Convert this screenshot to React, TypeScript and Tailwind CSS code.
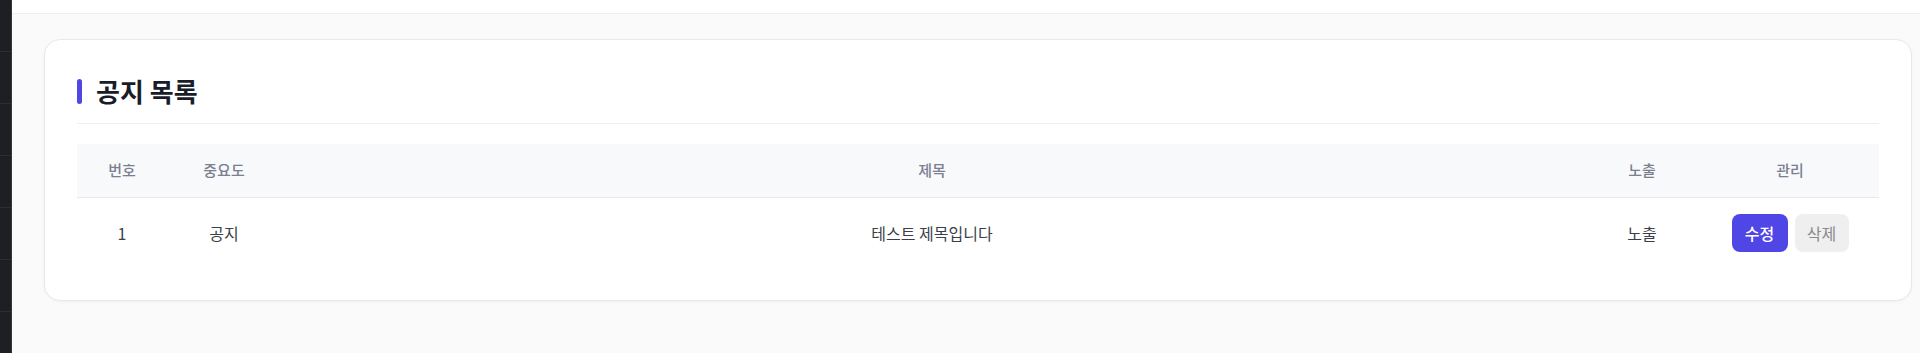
import React from "react";

type Notice = {
  id: number;
  level: string;
  title: string;
  visible: string;
};

const notices: Notice[] = [
  { id: 1, level: "공지", title: "테스트 제목입니다", visible: "노출" },
];

export default function App() {
  return (
    <div
      className="w-[1920px] h-[353px] flex overflow-hidden bg-[#fafafa]"
      style={{ fontFamily: '"Noto Sans CJK KR", "Noto Sans", sans-serif' }}
    >
      {/* Sidebar edge */}
      <div className="w-[12px] shrink-0 bg-[#1e1f23] border-r border-[#34363c] flex flex-col">
        {[0, 1, 2, 3, 4, 5, 6].map((i) => (
          <div key={i} className="h-[52px] shrink-0 border-b border-[#2c2e33]" />
        ))}
      </div>

      <div className="flex-1 flex flex-col">
        {/* Top bar */}
        <div className="h-[14px] shrink-0 bg-white border-b border-[#eeeeee]" />

        <main className="pl-[32px] pr-[8px] pt-[25px]">
          <div className="bg-white border border-[#e8e8ec] rounded-2xl shadow-[0_1px_3px_rgba(0,0,0,0.04)] px-[32px] pt-[32px] pb-[31px]">
            <div className="flex items-center gap-[14px] h-[38px]">
              <span className="w-[5px] h-[25px] rounded-full bg-[#4f46e5]" />
              <h1 className="text-[26px] leading-[32px] font-bold text-[#1a1d29]">
                공지 목록
              </h1>
            </div>
            <div className="mt-[13px] border-b border-[#eeeff2]" />

            <table className="w-full mt-[20px] table-fixed border-collapse">
              <colgroup>
                <col className="w-[90px]" />
                <col className="w-[114px]" />
                <col />
                <col className="w-[118px]" />
                <col className="w-[178px]" />
              </colgroup>
              <thead>
                <tr className="bg-[#f8f9fb] border-b border-[#e6e8ec] h-[53px]">
                  {["번호", "중요도", "제목", "노출", "관리"].map((h) => (
                    <th
                      key={h}
                      className="text-center text-[15px] font-medium text-[#7b8090]"
                    >
                      {h}
                    </th>
                  ))}
                </tr>
              </thead>
              <tbody>
                {notices.map((n) => (
                  <tr key={n.id} className="h-[72px] text-[16px] font-normal text-[#3a3f4b]">
                    <td className="text-center">{n.id}</td>
                    <td className="text-center">{n.level}</td>
                    <td className="text-center">{n.title}</td>
                    <td className="text-center">{n.visible}</td>
                    <td>
                      <div className="flex items-center justify-center gap-[7px]">
                        <button className="h-[38px] w-[56px] rounded-lg bg-[#4f46e5] text-white text-[16px] font-medium">
                          수정
                        </button>
                        <button className="h-[38px] w-[54px] rounded-lg bg-[#efefef] text-[#8a8a8a] text-[16px]">
                          삭제
                        </button>
                      </div>
                    </td>
                  </tr>
                ))}
              </tbody>
            </table>
          </div>
        </main>
      </div>
    </div>
  );
}
